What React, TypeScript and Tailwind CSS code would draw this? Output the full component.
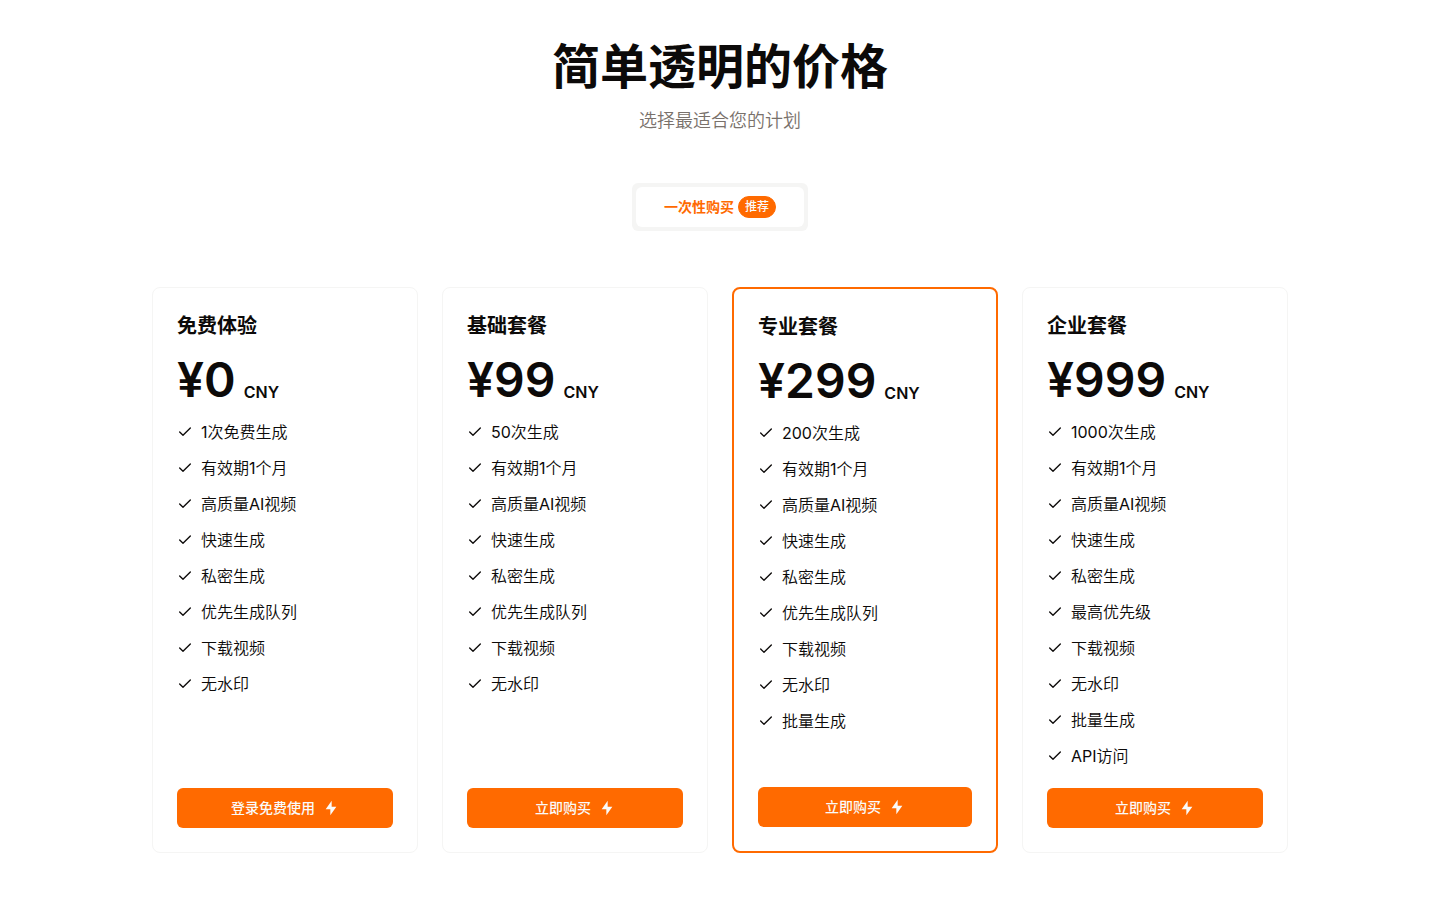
import { RiFlashlightFill } from 'react-icons/ri'
import { Check } from 'lucide-react'
import clsx from 'clsx'

interface Plan {
  name: string
  price: string
  features: string[]
  action: string
  featured?: boolean
}

const plans: Plan[] = [
  {
    name: '免费体验',
    price: '¥0',
    features: ['1次免费生成', '有效期1个月', '高质量AI视频', '快速生成', '私密生成', '优先生成队列', '下载视频', '无水印'],
    action: '登录免费使用',
  },
  {
    name: '基础套餐',
    price: '¥99',
    features: ['50次生成', '有效期1个月', '高质量AI视频', '快速生成', '私密生成', '优先生成队列', '下载视频', '无水印'],
    action: '立即购买',
  },
  {
    name: '专业套餐',
    price: '¥299',
    features: ['200次生成', '有效期1个月', '高质量AI视频', '快速生成', '私密生成', '优先生成队列', '下载视频', '无水印', '批量生成'],
    action: '立即购买',
    featured: true,
  },
  {
    name: '企业套餐',
    price: '¥999',
    features: ['1000次生成', '有效期1个月', '高质量AI视频', '快速生成', '私密生成', '最高优先级', '下载视频', '无水印', '批量生成', 'API访问'],
    action: '立即购买',
  },
]

function PlanCard({ plan }: { plan: Plan }) {
  return (
    <article
      className={clsx(
        'flex flex-col justify-between gap-5 rounded-lg p-6',
        plan.featured ? 'border-2 border-[#ff6a00]' : 'border border-stone-100'
      )}
    >
      <div className="flex flex-col gap-4">
        <h3 className="text-xl font-semibold">{plan.name}</h3>
        <div className="flex items-end gap-2 font-semibold">
          <span className="text-5xl">{plan.price}</span>
          <span className="text-base">CNY</span>
        </div>
        <ul className="flex flex-col gap-3 font-['Inter','Noto_Sans_CJK_SC_DemiLight','Noto_Sans_CJK_SC',sans-serif]">
          {plan.features.map((feature) => (
            <li key={feature} className="flex items-center gap-2">
              <Check className="size-4 shrink-0" />
              {feature}
            </li>
          ))}
        </ul>
      </div>
      <button
        type="button"
        className="flex h-10 w-full items-center justify-center gap-2 rounded-md bg-[#ff6a00] font-['Inter','Noto_Sans_CJK_SC_Medium','Noto_Sans_CJK_SC',sans-serif] text-sm font-medium text-stone-50 hover:bg-[#ff6a00]/90"
      >
        {plan.action}
        <RiFlashlightFill className="size-4" />
      </button>
    </article>
  )
}

export default function App() {
  return (
    <section
      lang="zh-CN"
      className="min-h-screen bg-white px-8 pt-[43px] pb-12 font-['Inter','Noto_Sans_CJK_SC',sans-serif] text-stone-950"
    >
      <div className="mx-auto flex max-w-[1136px] flex-col">
        <header className="mb-12 text-center">
          <h2 className="mb-4 text-5xl font-semibold">简单透明的价格</h2>
          <p className="font-['Inter','Noto_Sans_CJK_SC_DemiLight','Noto_Sans_CJK_SC',sans-serif] text-lg text-stone-500">
            选择最适合您的计划
          </p>
        </header>

        <div className="mb-14 flex self-center rounded-md bg-stone-100 p-1">
          <label className="flex h-10 cursor-pointer items-center gap-1 rounded-md bg-white px-7 text-sm font-semibold text-[#ff6a00]">
            <input type="radio" name="billing" defaultChecked className="sr-only" />
            一次性购买
            <span className="rounded-full border border-[#ff6a00] bg-[#ff6a00] px-1.5 py-0.5 font-['Inter','Noto_Sans_CJK_SC_Medium','Noto_Sans_CJK_SC',sans-serif] text-xs font-medium text-stone-50">
              推荐
            </span>
          </label>
        </div>

        <div className="grid gap-6 sm:grid-cols-2 lg:grid-cols-4">
          {plans.map((plan) => (
            <PlanCard key={plan.name} plan={plan} />
          ))}
        </div>
      </div>
    </section>
  )
}
